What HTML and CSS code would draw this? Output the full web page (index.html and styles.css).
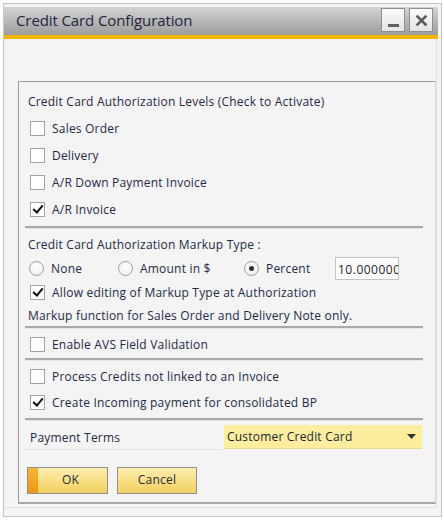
FILE: index.html
```html
<!DOCTYPE html>
<html>
<head>
<meta charset="utf-8">
<title>Credit Card Configuration</title>
<link rel="stylesheet" href="styles.css">
</head>
<body>
<div class="window">
  <div class="titlebar">
    <span class="title">Credit Card Configuration</span>
    <div class="tb-buttons">
      <button class="tb-btn" aria-label="Minimize"><span class="min-bar"></span></button>
      <button class="tb-btn" aria-label="Close">
        <svg width="13" height="13" viewBox="0 0 13 13"><path d="M2.5 2.5 L10.5 10.5 M10.5 2.5 L2.5 10.5" stroke="#5c5c5c" stroke-width="2.6" stroke-linecap="square"/></svg>
      </button>
    </div>
  </div>
  <div class="accent"></div>

  <div class="client">
    <div class="panel">
      <div class="section sec-levels">
        <div class="row heading">Credit Card Authorization Levels (Check to Activate)</div>
        <label class="row check"><span class="cb"></span>Sales Order</label>
        <label class="row check"><span class="cb"></span>Delivery</label>
        <label class="row check"><span class="cb"></span>A/R Down Payment Invoice</label>
        <label class="row check"><span class="cb checked"></span>A/R Invoice</label>
      </div>
      <div class="sep"></div>

      <div class="section sec-markup">
        <div class="row heading">Credit Card Authorization Markup Type :</div>
        <div class="row radios">
          <label class="radio r-none"><span class="rb"></span>None</label>
          <label class="radio r-amount"><span class="rb"></span>Amount in $</label>
          <label class="radio r-percent"><span class="rb on"></span>Percent</label>
          <div class="num-field">10.000000</div>
        </div>
        <label class="row check"><span class="cb checked"></span>Allow editing of Markup Type at Authorization</label>
        <div class="row note">Markup function for Sales Order and Delivery Note only.</div>
      </div>
      <div class="sep"></div>

      <div class="section sec-avs">
        <label class="row check"><span class="cb"></span>Enable AVS Field Validation</label>
      </div>
      <div class="sep"></div>

      <div class="section sec-credits">
        <label class="row check"><span class="cb"></span>Process Credits not linked to an Invoice</label>
        <label class="row check"><span class="cb checked"></span>Create Incoming payment for consolidated BP</label>
      </div>
      <div class="sep"></div>

      <div class="terms">
        <span class="terms-label">Payment Terms</span>
        <div class="dropdown">
          <span>Customer Credit Card</span>
          <svg width="9" height="5" viewBox="0 0 9 5"><path d="M0 0 H9 L4.5 5 Z" fill="#333"/></svg>
        </div>
      </div>

      <div class="actions">
        <button class="btn primary">OK</button>
        <button class="btn">Cancel</button>
      </div>
    </div>
  </div>
</div>
</body>
</html>
```

FILE: styles.css
```css
* { box-sizing: border-box; }

html, body {
  margin: 0;
  padding: 0;
  background: #ffffff;
}

body {
  font-family: "Open Sans", "Noto Sans", sans-serif;
  font-size: 12px;
  letter-spacing: 0.2px;
  color: #1f2a44;
}

.window {
  margin: 3px 0 0 3px;
  width: 439px;
  height: 514px;
  border: 1px solid #c4c4c4;
  background: #f4f4f4;
  padding-top: 3px;
  display: flex;
  flex-direction: column;
}

/* title bar */
.titlebar {
  height: 28px;
  margin-right: 3px;
  background: linear-gradient(#d4d4d4, #b4b4b4 55%, #9d9d9d);
  display: flex;
  align-items: flex-start;
  justify-content: space-between;
  padding-left: 12px;
}

.title {
  font-size: 15px;
  color: #1c2640;
  letter-spacing: -0.1px;
  line-height: 26px;
}

.tb-buttons {
  display: flex;
  gap: 4px;
  padding: 1px 5px 0 0;
}

.tb-btn {
  width: 24px;
  height: 24px;
  padding: 0;
  margin: 0;
  border: 1px solid #8e8e8e;
  background: linear-gradient(#fbfbfb, #e4e4e4);
  display: flex;
  align-items: center;
  justify-content: center;
}

.min-bar {
  width: 11px;
  height: 3px;
  background: #5e5e5e;
  margin-top: 11px;
}

.accent {
  height: 4px;
  margin-right: 3px;
  background: #f2b705;
}

/* client area */
.client {
  height: 469px;
  margin-right: 4px;
  border-right: 1px solid #e2e2e2;
  border-bottom: 1px solid #e2e2e2;
  padding: 42px 0 0 14px;
}

.panel {
  height: 423px;
  border: 1px solid #9c9c9c;
  border-right-color: #dadada;
  border-bottom-color: #a8a8a8;
  border-bottom-width: 2px;
  padding: 5px 12px 0 6px;
}

.section { display: flex; flex-direction: column; }

.row {
  display: flex;
  align-items: center;
  height: 27px;
  padding-left: 3px;
  white-space: nowrap;
}

.check { padding-left: 5px; }

.cb {
  width: 15px;
  height: 15px;
  border: 1px solid #a3a3a3;
  background: #ffffff;
  margin-right: 7px;
  flex: none;
  position: relative;
}

.cb.checked::after {
  content: "";
  position: absolute;
  left: 4px;
  top: 0px;
  width: 4px;
  height: 8px;
  border: solid #111;
  border-width: 0 2.5px 2.5px 0;
  transform: rotate(40deg);
}

.sep {
  height: 3px;
  flex: none;
  background: #a9a9a9;
  border-bottom: 1px solid #e4e4e4;
}

/* section heights */
.sec-levels { padding-bottom: 3px; }
.sec-levels .heading { height: 28px; }

.sec-markup { padding: 3px 0 0; }
.sec-markup .heading { height: 22px; }
.sec-markup .row { height: 24px; }
.sec-markup .note { height: 22px; }

.sec-avs { padding: 2px 0 1px; }
.sec-avs .row { height: 26px; }

.sec-credits { padding: 2px 0 3px; }
.sec-credits .row { height: 26px; }

.radios { padding-left: 4px; }

.radio {
  display: flex;
  align-items: center;
}

.r-none { width: 89px; }
.r-amount { width: 126px; }
.r-percent { width: 91px; }

.rb {
  width: 15px;
  height: 15px;
  border-radius: 50%;
  border: 1px solid #9f9f9f;
  background: radial-gradient(circle at 50% 35%, #ffffff, #ececec);
  margin-right: 7px;
  flex: none;
  position: relative;
}

.rb.on::after {
  content: "";
  position: absolute;
  left: 4px;
  top: 4px;
  width: 5px;
  height: 5px;
  border-radius: 50%;
  background: #333;
}

/* value runs past the box edge and is cut off */
.num-field {
  width: 64px;
  height: 23px;
  border: 1px solid #c4c4c4;
  background: #ffffff;
  padding: 3px 0 0 2px;
  overflow: hidden;
  white-space: nowrap;
  letter-spacing: 0.5px;
  color: #222;
}

/* payment terms */
.terms {
  display: flex;
  align-items: center;
  justify-content: space-between;
  margin-top: 4px;
  height: 24px;
  position: relative;
}

.terms::after {
  content: "";
  position: absolute;
  left: 0;
  width: 197px;
  bottom: -1px;
  height: 1px;
  background: #dcdfe6;
}

.terms-label { padding-left: 5px; }

.dropdown {
  width: 198px;
  height: 24px;
  margin-right: 1px;
  background: #fcee9e;
  border-bottom: 1px solid #e6da90;
  display: flex;
  align-items: center;
  justify-content: space-between;
  padding: 0 6px 0 3px;
  color: #161e33;
}

/* buttons */
.actions {
  display: flex;
  gap: 9px;
  margin-top: 18px;
  padding-left: 2px;
}

.btn {
  width: 81px;
  height: 27px;
  border: 1px solid #8f8f8f;
  background: linear-gradient(#fdeeb2, #f6dc7c 60%, #f1d060);
  font-family: inherit;
  font-size: 12px;
  letter-spacing: 0.2px;
  color: #1f2a44;
  padding: 0 0 2px;
}

.btn.primary {
  background:
    linear-gradient(#f7b733, #ee9514) left / 10px 100% no-repeat,
    linear-gradient(#fdeeb2, #f6dc7c 60%, #f1d060);
  padding-left: 6px;
}

.actions .btn + .btn { width: 80px; }
```
